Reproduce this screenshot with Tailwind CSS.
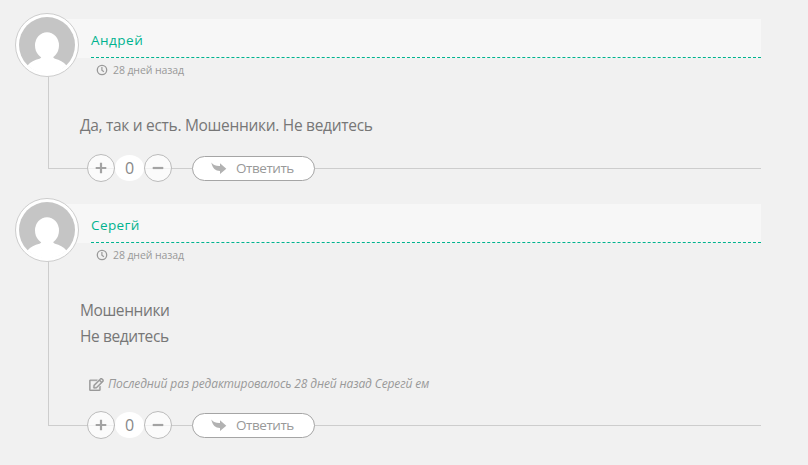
<!DOCTYPE html>
<html lang="ru">
<head>
<meta charset="utf-8">
<title>Комментарии</title>
<script src="https://cdn.jsdelivr.net/npm/@tailwindcss/browser@4"></script>
</head>
<body class="bg-[#f1f1f1] font-['Open_Sans','Noto_Sans',sans-serif] text-[#777] w-[808px] h-[465px] overflow-hidden">
<svg class="hidden">
  <symbol id="person" viewBox="0 0 56 56">
    <circle cx="28" cy="28" r="28" fill="#c5c5c5"/>
    <ellipse cx="28" cy="28.500" rx="12" ry="13.300" fill="#fff"/>
    <path fill="#fff" d="M22 37h12.500c-.8 2.500-.5 4 1.500 4.700 4.500.8 8.500 3.300 11.500 6.800A28 28 0 0 1 8.500 48.500C11.500 45 15.500 42.500 20.500 41.700c2-.7 2.300-2.200 1.500-4.700z"/>
  </symbol>
  <symbol id="clock" viewBox="0 0 12 12">
    <circle cx="6" cy="6" r="4.700" fill="none" stroke="#999" stroke-width="1.300"/>
    <path d="M5.900 3v3.200l2 1.500" fill="none" stroke="#999" stroke-width="1.200"/>
  </symbol>
  <symbol id="share" viewBox="0 0 16 14">
    <path fill="#b2b2b2" d="M.3 1.500C2.600 4.600 5.500 5 9 4.900V2.300L15.300 7.700 9 13V10C4.500 10 1.500 7.300 .3 1.500z"/>
  </symbol>
  <symbol id="edit" viewBox="0 0 576 512">
    <path fill="#999" stroke="#999" stroke-width="12" d="M402.300 344.900l32-32c5-5 13.700-1.500 13.700 5.700V464c0 26.500-21.500 48-48 48H48c-26.500 0-48-21.500-48-48V112c0-26.500 21.500-48 48-48h273.500c7.100 0 10.700 8.600 5.700 13.700l-32 32c-1.500 1.500-3.500 2.300-5.700 2.300H48v352h352V350.500c0-2.100.8-4.100 2.300-5.600zm156.600-201.800L296.300 405.700l-90.400 10c-26.200 2.900-48.500-19.200-45.600-45.600l10-90.400L432.900 17.100c22.900-22.900 59.900-22.900 82.700 0l43.200 43.200c22.900 22.900 22.900 60 .1 82.800zM460.100 174L402 115.900 216.200 301.800l-7.300 65.300 65.300-7.300L460.100 174zm64.800-79.700l-43.200-43.200c-4.100-4.100-10.800-4.100-14.800 0L436 82l58.100 58.100 30.900-30.900c4-4.200 4-10.800-.1-14.900z"/>
  </symbol>
</svg>
<main class="pt-[19px] pl-12">
  <article class="relative flex flex-col w-[713px] h-[150px] border-l border-b border-[#cdcdcd]">
    <div class="absolute -left-[34px] -top-[6px] size-16 rounded-full border border-[#cdcdcd] bg-white p-[3px]"><svg class="size-14"><use href="#person"/></svg></div>
    <header class="bg-[#f7f7f7] pl-[42px] h-[39px]">
      <div class="h-[39px] border-b border-dashed border-[#00b38f] pt-[11px] text-[13.5px] leading-[20px] tracking-[0.5px] text-[#00b38f] whitespace-nowrap"><span>Андрей</span></div>
    </header>
    <div class="flex items-center gap-[5px] pl-[47px] h-6 text-[10.5px] tracking-[-0.1px] text-[#999]"><svg class="size-3"><use href="#clock"/></svg><span class="pt-[2px]">28 дней назад</span></div>
    <p class="pl-[31px] pt-[30px] text-[15.5px] tracking-[-0.3px] leading-[26px] whitespace-nowrap">Да, так и есть. Мошенники. Не ведитесь</p>
    <footer class="mt-auto -mb-[14px] flex items-center pl-[38px] h-7">
      <button class="size-7 rounded-full border border-[#bbb] bg-white/70 grid place-items-center"><svg class="size-3" viewBox="0 0 12 12"><path d="M6 .7v10.600M.7 6h10.600" stroke="#a3a3a3" stroke-width="2.200"/></svg></button>
      <span class="w-[29px] h-[26px] rounded-[50%] bg-white grid place-items-center text-[16px] leading-none text-[#888]">0</span>
      <button class="size-7 rounded-full border border-[#bbb] bg-white/70 grid place-items-center"><svg class="size-3" viewBox="0 0 12 12"><path d="M.7 6h10.600" stroke="#a3a3a3" stroke-width="2.200"/></svg></button>
      <button class="ml-5 w-[123px] h-[25px] rounded-full border border-[#a5a5a5] bg-white flex items-center gap-[9px] pl-[18px] text-[13.5px] tracking-[-0.45px] leading-none text-[#999]"><svg class="w-4 h-3.5"><use href="#share"/></svg><span class="pt-[2px]">Ответить</span></button>
    </footer>
  </article>
  <article class="relative flex flex-col w-[713px] h-[222px] mt-[35px] border-l border-b border-[#cdcdcd]">
    <div class="absolute -left-[34px] -top-[6px] size-16 rounded-full border border-[#cdcdcd] bg-white p-[3px]"><svg class="size-14"><use href="#person"/></svg></div>
    <header class="bg-[#f7f7f7] pl-[42px] h-[39px]">
      <div class="h-[39px] border-b border-dashed border-[#00b38f] pt-[11px] text-[13.5px] leading-[20px] tracking-[0.4px] text-[#00b38f] whitespace-nowrap"><span>Серегй</span></div>
    </header>
    <div class="flex items-center gap-[5px] pl-[47px] h-6 text-[10.5px] tracking-[-0.1px] text-[#999]"><svg class="size-3"><use href="#clock"/></svg><span class="pt-[2px]">28 дней назад</span></div>
    <p class="pl-[31px] pt-[30px] text-[15.5px] tracking-[-0.4px] leading-[26px] whitespace-nowrap">Мошенники<br>Не ведитесь</p>
    <div class="flex items-center gap-1 pl-10 mt-[25px] h-5 text-[12px] tracking-[-0.13px] italic text-[#999] whitespace-nowrap"><svg class="w-[15px] h-[13px] overflow-visible"><use href="#edit"/></svg><span>Последний раз редактировалось 28 дней назад Серегй ем</span></div>
    <footer class="mt-auto -mb-[14px] flex items-center pl-[38px] h-7">
      <button class="size-7 rounded-full border border-[#bbb] bg-white/70 grid place-items-center"><svg class="size-3" viewBox="0 0 12 12"><path d="M6 .7v10.600M.7 6h10.600" stroke="#a3a3a3" stroke-width="2.200"/></svg></button>
      <span class="w-[29px] h-[26px] rounded-[50%] bg-white grid place-items-center text-[16px] leading-none text-[#888]">0</span>
      <button class="size-7 rounded-full border border-[#bbb] bg-white/70 grid place-items-center"><svg class="size-3" viewBox="0 0 12 12"><path d="M.7 6h10.600" stroke="#a3a3a3" stroke-width="2.200"/></svg></button>
      <button class="ml-5 w-[123px] h-[25px] rounded-full border border-[#a5a5a5] bg-white flex items-center gap-[9px] pl-[18px] text-[13.5px] tracking-[-0.45px] leading-none text-[#999]"><svg class="w-4 h-3.5"><use href="#share"/></svg><span class="pt-[2px]">Ответить</span></button>
    </footer>
  </article>
</main>
</body>
</html>
